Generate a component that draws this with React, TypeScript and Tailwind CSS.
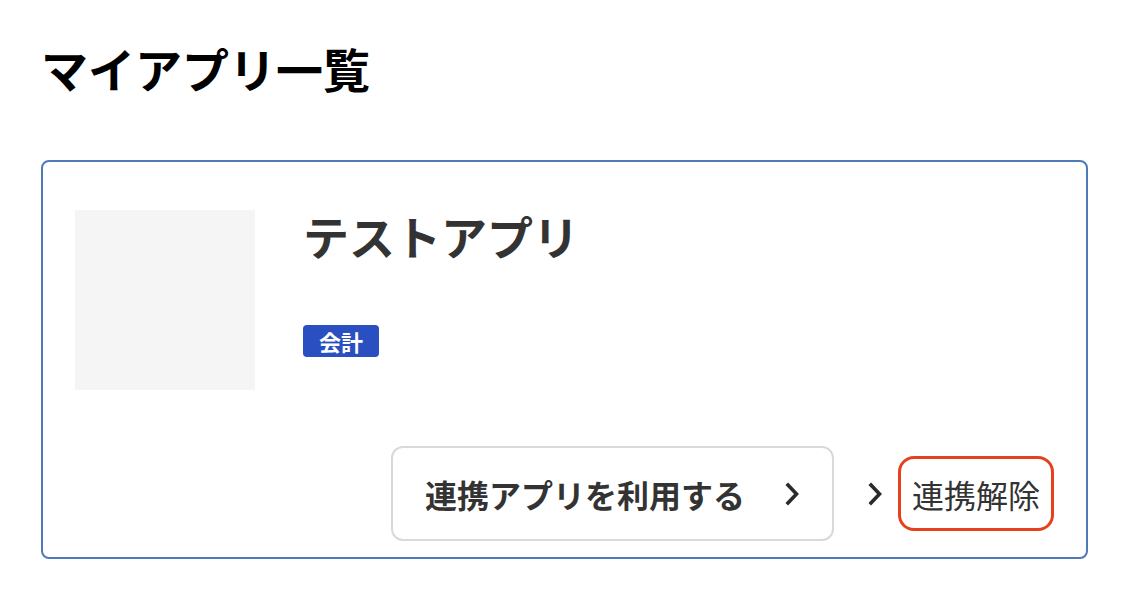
const font = { fontFamily: '"Noto Sans CJK JP", "Noto Sans", sans-serif' };

const Chevron = () => (
  <svg width="16" height="24" viewBox="0 0 16 24" fill="none">
    <polyline
      points="4,3 12.5,12 4,21"
      stroke="#2b2b2b"
      strokeWidth="3.6"
      strokeLinecap="square"
      strokeLinejoin="miter"
    />
  </svg>
);

const App = () => {
  return (
    <div className="min-h-[590px] bg-white pl-[41px] pr-[46px] pt-[44px]" style={font}>
      {/* Page title */}
      <h1 className="text-[47px] font-bold leading-none text-black">マイアプリ一覧</h1>

      {/* App card */}
      <div className="mt-[69px] rounded-[8px] border-2 border-[#4f79b9] pl-8 pr-8 pt-12 pb-4">
        <div className="flex gap-12">
          <div className="h-[180px] w-[180px] bg-[#f5f5f5]" />
          <div className="flex flex-col">
            <h2 className="mt-[2px] text-[46px] font-bold leading-none text-[#333]">テストアプリ</h2>
            <div className="mt-[67px] flex">
              <span className="flex h-8 items-center rounded-[4px] bg-[#2a4fc0] px-4 text-[22px] font-bold leading-none text-white">
                会計
              </span>
            </div>
          </div>
        </div>

        {/* Actions */}
        <div className="mt-[56px] flex items-center justify-end">
          <button className="flex h-[95px] w-[443px] items-center justify-between rounded-[12px] border-2 border-[#d9d9d9] bg-white pl-8 pr-8">
            <span className="text-[32px] font-bold leading-none text-[#333]">連携アプリを利用する</span>
            <Chevron />
          </button>
          <div className="ml-[33px] flex items-center gap-[15px]">
            <Chevron />
            <a className="flex h-[75px] w-[156px] items-center justify-center rounded-[16px] border-[3px] border-[#e8401c] text-[32px] leading-none text-[#333]">
              連携解除
            </a>
          </div>
        </div>
      </div>
    </div>
  );
};

export default App;
